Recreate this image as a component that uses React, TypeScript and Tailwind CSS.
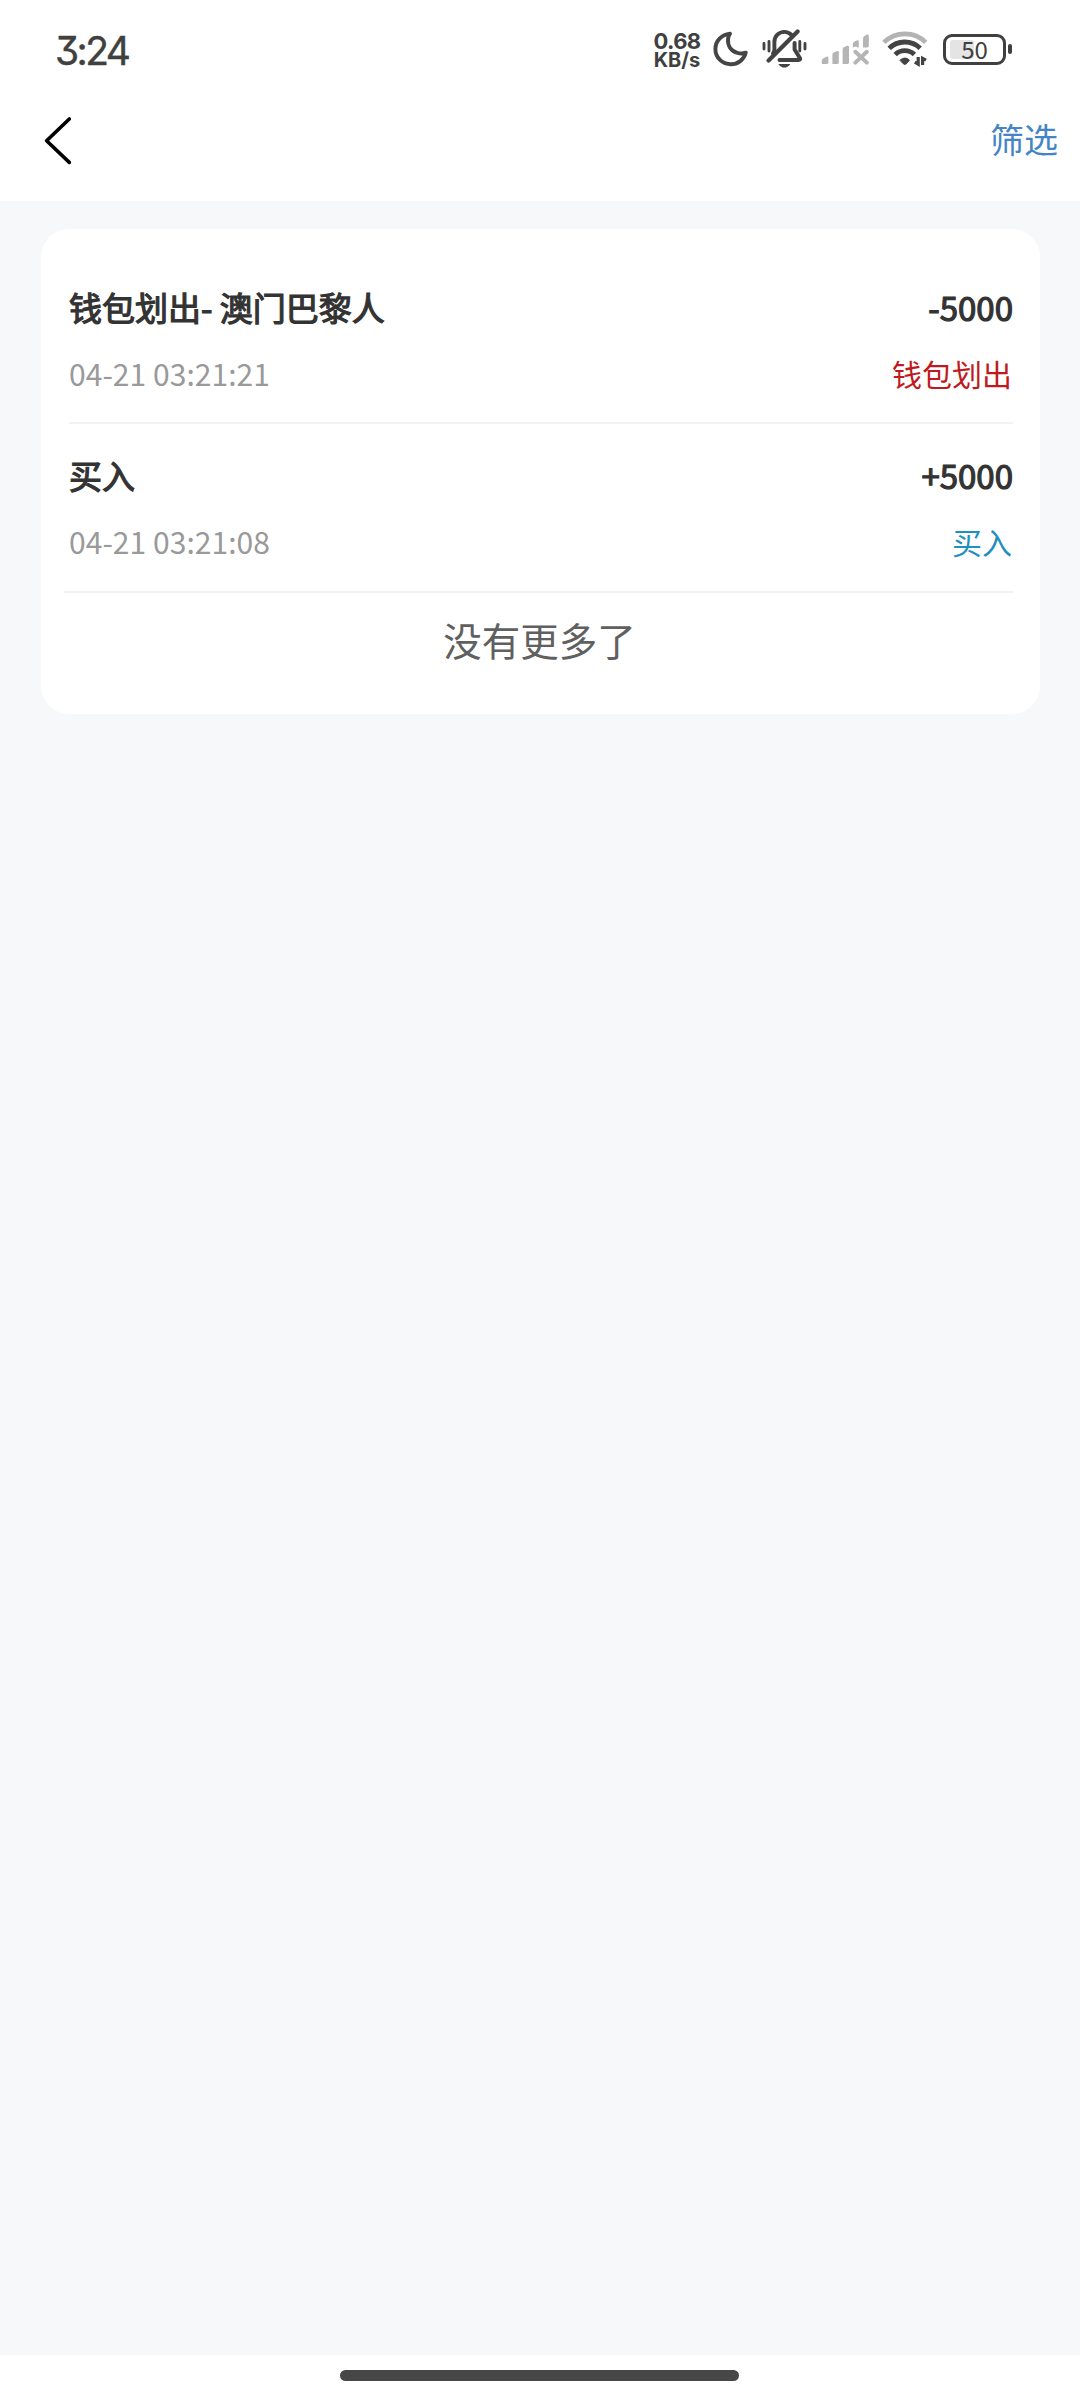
const cjk = "font-['Noto_Sans_CJK_SC','Noto_Sans_CJK_TC',sans-serif]";

type Entry = { title: string; amount: string; time: string; kind: string; kindClass: string; rowClass: string; lineClass: string };

const entries: Entry[] = [
  {
    title: "钱包划出- 澳门巴黎人",
    amount: "-5000",
    time: "04-21 03:21:21",
    kind: "钱包划出",
    kindClass: "text-[#c01a20]",
    rowClass: "pt-[28px]",
    lineClass: "",
  },
  {
    title: "买入",
    amount: "+5000",
    time: "04-21 03:21:08",
    kind: "买入",
    kindClass: "text-[#1f8fbd]",
    rowClass: "pt-[27px]",
    lineClass: "-ml-[5px]",
  },
];

function MoonIcon() {
  return (
    <svg width="36" height="38" viewBox="0 0 36 38" fill="none" stroke="#454545" strokeWidth="3.9" strokeLinejoin="round">
      <path d="M17 3.6C8.6 4.6 2.4 11 2.4 19C2.4 27.8 9.4 34.2 18 34.2C24.8 34.2 31 29.8 32.8 22.6C30.4 23.6 27.4 23.8 24.6 23C18 21 14.6 15.6 15 9.4C15.1 7.2 15.9 5.2 17 3.6Z" />
    </svg>
  );
}

function MutedBellIcon() {
  return (
    <svg width="46" height="40" viewBox="0 0 46 40" fill="none" stroke="#434343" strokeLinecap="round">
      <path d="M2 14.5V20M7 12.5V22M37.8 12.5V22M43 14.5V20" strokeWidth="2.9" />
      <path d="M29.6 6C27.6 4 25.2 2.9 22.4 2.9C16.4 2.9 12.4 7.4 12.4 13V21.5L11 24.5" strokeWidth="3.9" />
      <path d="M32.6 14V20.5L38 29.2Q38.6 30.9 36.6 30.9H17.5" strokeWidth="4" strokeLinejoin="round" />
      <path d="M35.6 2.6L6.6 31.6" strokeWidth="4.2" />
      <path d="M16.4 35H28.4C26.4 37.8 24.6 38.6 22.4 38.6C20.2 38.6 18.2 37.8 16.4 35Z" fill="#434343" stroke="none" />
    </svg>
  );
}

function SignalIcon() {
  return (
    <svg width="48" height="32" viewBox="0 0 48 32" fill="#b5b5b5">
      <path d="M0.8 31V27Q1.2 26 3 25L5.5 23.7Q7.4 23.2 7.4 25V29.6Q7.4 31 6 31Z" />
      <path d="M11.4 31V21.5Q11.5 20 13 19.4L16 18Q17.8 17.6 17.8 19.2V29.6Q17.8 31 16.4 31Z" />
      <path d="M21.6 31V16.5Q21.6 15 23 14.2L26 12.8Q28 12.4 28 14V29.6Q28 31 26.6 31Z" />
      <path d="M31.8 14.6V10.8Q32 9.4 33.4 8.6L36.2 7.3Q37.8 7 37.8 8.6V14.6H36.4L35 13.4Z" />
      <path d="M42 14.6V5.4Q42 4 43.4 3L46.2 1.6Q47.8 1.2 47.8 3V12.6Q47.8 14.6 46 14.6Z" />
      <path d="M34.4 18.8L45.8 29.6M45.8 18.8L34.4 29.6" fill="none" stroke="#b5b5b5" strokeWidth="4" strokeLinecap="round" />
    </svg>
  );
}

function WifiIcon() {
  return (
    <svg width="48" height="36" viewBox="0 0 48 36" fill="none" strokeLinecap="round">
      <path d="M2.9 11.4C14.5 0 33.5 0 44.7 11.4" stroke="#b3b3b3" strokeWidth="4.6" strokeLinecap="butt" />
      <path d="M8.2 17.4C16.5 9 30.5 8.8 39.2 17.2" stroke="#434343" strokeWidth="4.8" strokeLinecap="butt" />
      <path d="M14.2 23.6C19.4 18.4 28 18.4 33.4 23.6" stroke="#434343" strokeWidth="4.8" strokeLinecap="butt" />
      <path d="M19.2 29Q23.8 25 28.4 29L25.6 32.6Q23.8 34.4 22 32.6Z" fill="#434343" stroke="#434343" strokeWidth="1" />
      <path d="M37.2 26V33.2L33.8 31.2M41.6 34V27.4L45 29.2" stroke="#434343" strokeWidth="3.2" strokeLinecap="butt" />
    </svg>
  );
}

function Battery() {
  return (
    <div className="flex items-center">
      <div className="relative flex h-[31px] w-[63px] items-center justify-center rounded-[9px] border-[3px] border-[#404040]">
        <div className="absolute left-[4px] top-[3px] h-[19px] w-[24px] rounded-[3px] bg-[#e4e4e4]" />
        <span className={`relative text-[24px] leading-none text-[#404040] ${cjk}`}>50</span>
      </div>
      <div className="ml-[2px] h-[10px] w-[4px] rounded-[2px] bg-[#404040]" />
    </div>
  );
}

function StatusBar() {
  return (
    <div className="flex h-[98px] items-center justify-between pl-[55px] pr-[68px]">
      <span className="pt-[2px] text-[39px] leading-none tracking-[-2.6px] text-[#404040] [-webkit-text-stroke:0.4px_#404040] font-['Inter',sans-serif] [font-feature-settings:'cv09']">
        3:24
      </span>
      <div className="flex items-center">
        <div className="mr-[12px] flex w-[48px] flex-col items-center gap-[1px] whitespace-nowrap pt-[2px] font-['Inter',sans-serif] font-bold text-[#404040]">
          <span className="h-[18px] text-[22px] leading-[18px] tracking-[-0.6px]">0.68</span>
          <span className="h-[18px] text-[20px] leading-[18px]">KB/s</span>
        </div>
        <MoonIcon />
        <div className="ml-[13px] flex items-center">
          <MutedBellIcon />
        </div>
        <div className="ml-[13px] flex items-center">
          <SignalIcon />
        </div>
        <div className="ml-[12px] flex items-center">
          <WifiIcon />
        </div>
        <div className="ml-[14px]">
          <Battery />
        </div>
      </div>
    </div>
  );
}

function NavBar() {
  return (
    <div className="flex h-[103px] items-start justify-between pl-[43px] pr-[22px]">
      <svg className="mt-[18px]" width="30" height="50" viewBox="0 0 30 50" fill="none" stroke="#000" strokeWidth="3.6" strokeLinecap="round" strokeLinejoin="round">
        <path d="M26.3 3L3.6 24.8L26.3 46.4" />
      </svg>
      <span className="mt-[16px] text-[34px] leading-[50px] text-[#4585c6]">筛选</span>
    </div>
  );
}

function Row({ entry }: { entry: Entry }) {
  return (
    <div className={`flex h-[169px] flex-col ${entry.rowClass}`}>
      <div className="flex h-[48px] justify-between text-[33px] leading-[48px] text-[#333333] [-webkit-text-stroke:1.2px_#333333]">
        <span>{entry.title}</span>
        <span>{entry.amount}</span>
      </div>
      <div className="mt-[18px] flex h-[48px] justify-between pr-[1px] text-[30px] leading-[48px]">
        <span className="tracking-[0.05px] text-[#999999]">{entry.time}</span>
        <span className={entry.kindClass}>{entry.kind}</span>
      </div>
      <div className={`mt-auto h-[2px] bg-[#f1f2f3] ${entry.lineClass}`} />
    </div>
  );
}

export default function App() {
  return (
    <div className={`flex h-[2400px] w-[1080px] flex-col overflow-hidden bg-white ${cjk}`}>
      <StatusBar />
      <NavBar />
      <main className="flex-1 bg-[#f6f8fa] pl-[41px] pr-[40px] pt-[28px]">
        <div className="h-[485px] rounded-[28px] bg-white pl-[28px] pr-[27px] pt-[26px]">
          {entries.map((entry) => (
            <Row key={entry.time} entry={entry} />
          ))}
          <div className="pt-[18px] pr-[3px] text-center text-[38.5px] leading-[56px] text-[#606060]">没有更多了</div>
        </div>
      </main>
      <footer className="flex h-[45px] justify-center bg-white pr-[1px] pt-[15px]">
        <div className="h-[11px] w-[399px] rounded-full bg-[#474747]" />
      </footer>
    </div>
  );
}
